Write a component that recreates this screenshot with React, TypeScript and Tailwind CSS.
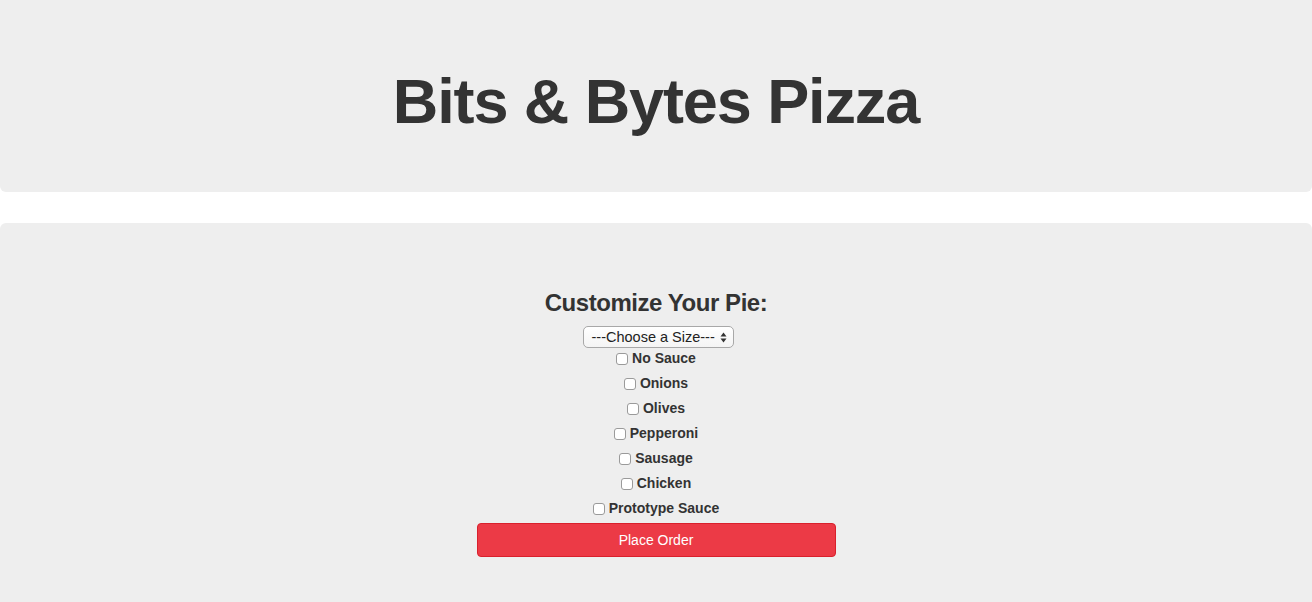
import React from "react";

const toppings = ["Onions", "Olives", "Pepperoni", "Sausage", "Chicken", "Prototype Sauce"];

function Box() {
  return (
    <span className="inline-block w-[12px] h-[12px] rounded-[3px] border border-[#9a9a9a] bg-white mr-[4px] shrink-0 translate-y-[1px]" />
  );
}

function Row({ label }: { label: string }) {
  return (
    <div className="h-[20px] flex items-center justify-center">
      <Box />
      <span className="font-bold text-[14px] leading-[20px]">{label}</span>
    </div>
  );
}

export default function App() {
  return (
    <div className="min-h-[602px] bg-white text-[#333]" style={{ fontFamily: '"Liberation Sans", Arial, sans-serif' }}>
      <div className="bg-[#eeeeee] rounded-b-[6px] h-[192px] pt-[67px] text-center">
        <h1 className="text-[63px] leading-[69px] font-bold tracking-[-1.1px]">Bits &amp; Bytes Pizza</h1>
      </div>
      <div className="mt-[31px] bg-[#eeeeee] rounded-t-[6px] h-[379px] pt-[67px] flex flex-col items-center">
        <h3 className="text-[24px] leading-[26px] font-bold tracking-[-0.45px]">Customize Your Pie:</h3>
        <div className="mt-[10px] ml-[4px] w-[151px] h-[22px] rounded-[5px] border border-[#a8a8a8] bg-gradient-to-b from-white to-[#f4f4f4] flex items-center pl-[8px] pr-[6px] text-[14.5px] text-[#222]">
          <span className="flex-1 leading-[20px] whitespace-nowrap">---Choose a Size---</span>
          <svg width="7" height="11" viewBox="0 0 7 11" className="text-[#333]">
            <path d="M3.5 0.5 L6.5 4.5 H0.5 Z" fill="currentColor" />
            <path d="M3.5 10.5 L6.5 6.5 H0.5 Z" fill="currentColor" />
          </svg>
        </div>
        <div className="flex flex-col gap-[5px]">
          <Row label="No Sauce" />
          {toppings.map((t) => (
            <Row key={t} label={t} />
          ))}
        </div>
        <button className="mt-[5px] w-[359px] h-[34px] rounded-[4px] bg-[#ec3a46] border border-[#d9202c] text-white text-[14px] leading-[20px]">
          Place Order
        </button>
      </div>
    </div>
  );
}
